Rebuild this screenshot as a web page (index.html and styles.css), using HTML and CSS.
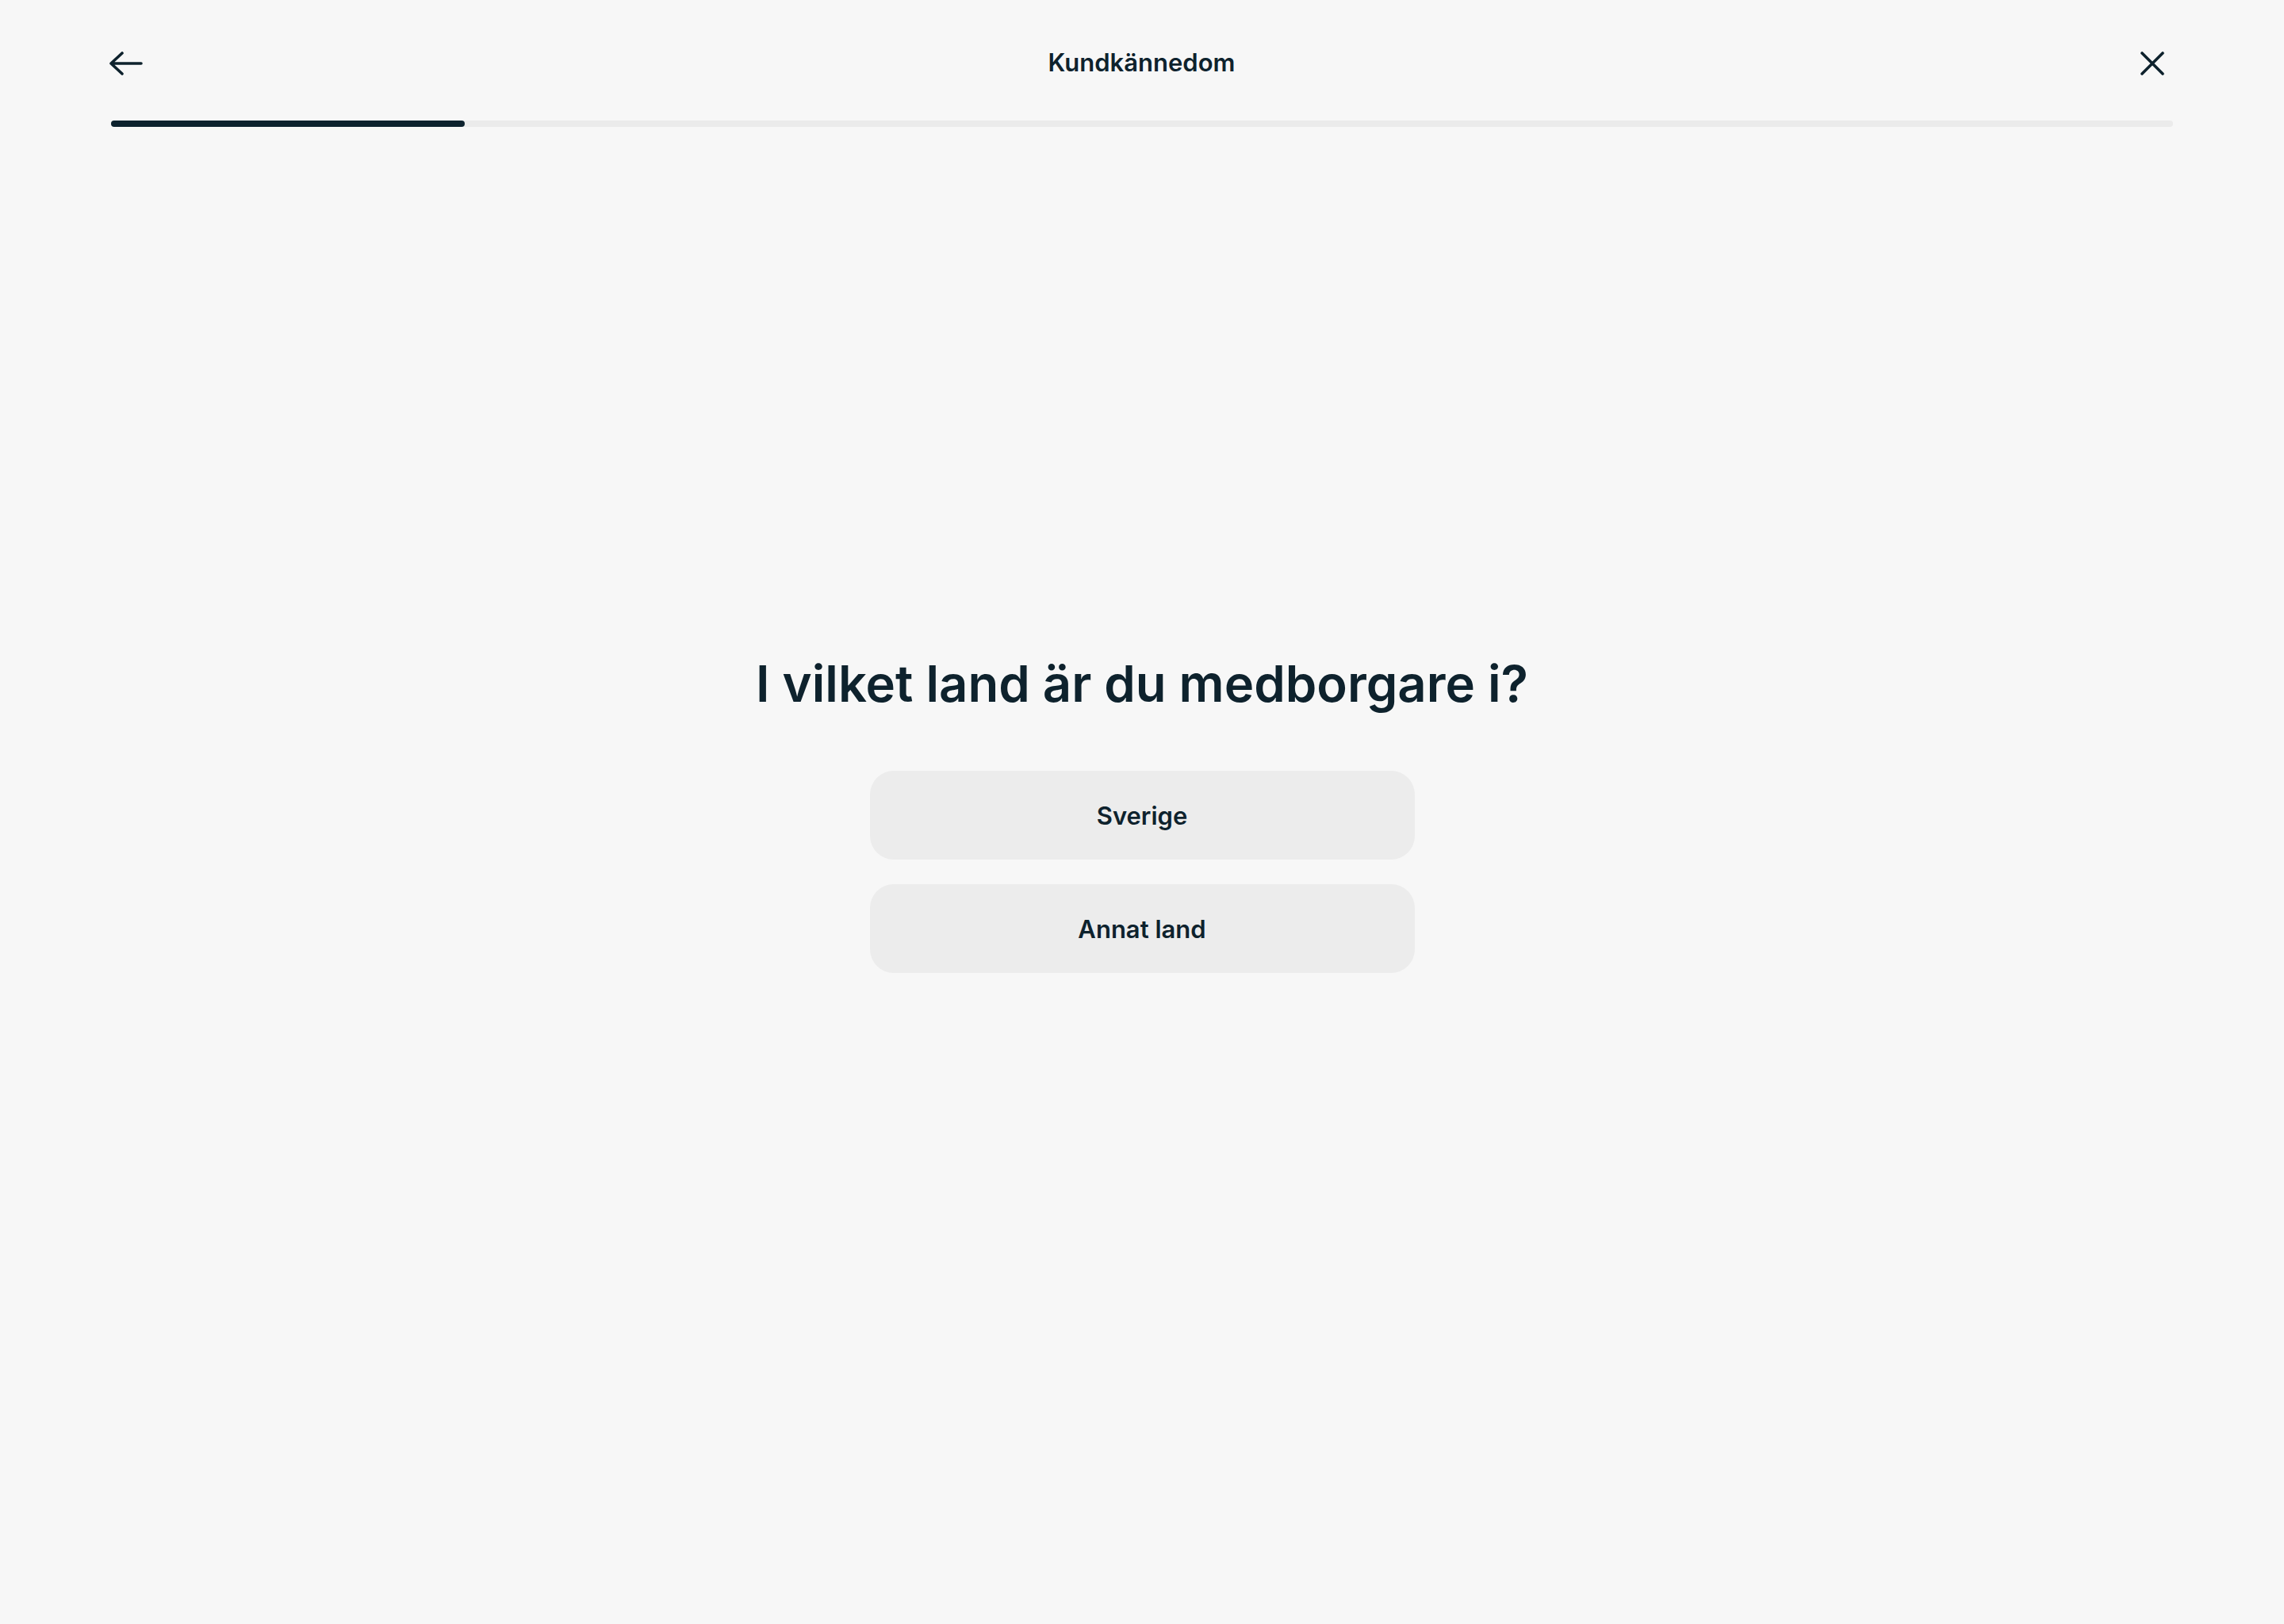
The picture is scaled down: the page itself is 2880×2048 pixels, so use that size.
FILE: index.html
```html
<!DOCTYPE html>
<html lang="sv">
<head>
  <meta charset="UTF-8">
  <meta name="viewport" content="width=device-width, initial-scale=1.0">
  <title>Kundkännedom</title>
  <link rel="stylesheet" href="styles.css">
</head>
<body>
  <header class="topbar">
    <div class="topbar-row">
      <button class="icon-btn back" aria-label="Tillbaka">
        <svg width="42" height="30" viewBox="0 0 42 30" fill="none" stroke="currentColor" stroke-width="3.6" stroke-linecap="round" stroke-linejoin="round">
          <path d="M2 15 H40 M16 2 L2 15 L16 28"/>
        </svg>
      </button>
      <div class="title">Kundkännedom</div>
      <button class="icon-btn close" aria-label="Stäng">
        <svg width="30" height="30" viewBox="0 0 30 30" fill="none" stroke="currentColor" stroke-width="3.6" stroke-linecap="round">
          <path d="M2 2 L28 28 M28 2 L2 28"/>
        </svg>
      </button>
    </div>
    <div class="progress">
      <div class="progress-fill" style="width: 17.15%"></div>
    </div>
  </header>

  <main class="question">
    <h1>I vilket land är du medborgare i?</h1>
    <div class="options">
      <button class="option">Sverige</button>
      <button class="option">Annat land</button>
    </div>
  </main>
</body>
</html>
```

FILE: styles.css
```css
body {
  font-family: 'Inter', 'Noto Sans', sans-serif;
  margin: 0;
  background: #f7f7f7;
  color: #0e222d;
}
.topbar {
  padding: 60px 140px 0;
}
.topbar-row {
  display: flex;
  align-items: center;
  justify-content: space-between;
  height: 40px;
}
.icon-btn {
  background: none;
  border: none;
  padding: 0;
  color: #0e222d;
  display: flex;
  align-items: center;
  cursor: pointer;
}
.icon-btn.back {
  margin-left: -2px;
}
.icon-btn.close {
  margin-right: 11px;
}
.title {
  font-size: 31px;
  font-weight: 600;
  margin-top: -3px;
}
.progress {
  margin-top: 52px;
  height: 8px;
  background: #ebebeb;
  border-radius: 4px;
}
.progress-fill {
  height: 100%;
  background: #0d222e;
  border-radius: 4px;
}
.question {
  display: flex;
  flex-direction: column;
  align-items: center;
  padding-top: 662px;
}
h1 {
  margin: 0;
  font-size: 63.4px;
  line-height: 80px;
  font-weight: 600;
}
.options {
  display: flex;
  flex-direction: column;
  gap: 31px;
  margin-top: 70px;
}
.option {
  width: 687px;
  height: 112px;
  border: none;
  border-radius: 30px;
  background: #ececec;
  color: #0e222d;
  font-family: inherit;
  font-size: 31px;
  font-weight: 600;
  cursor: pointer;
}
```
